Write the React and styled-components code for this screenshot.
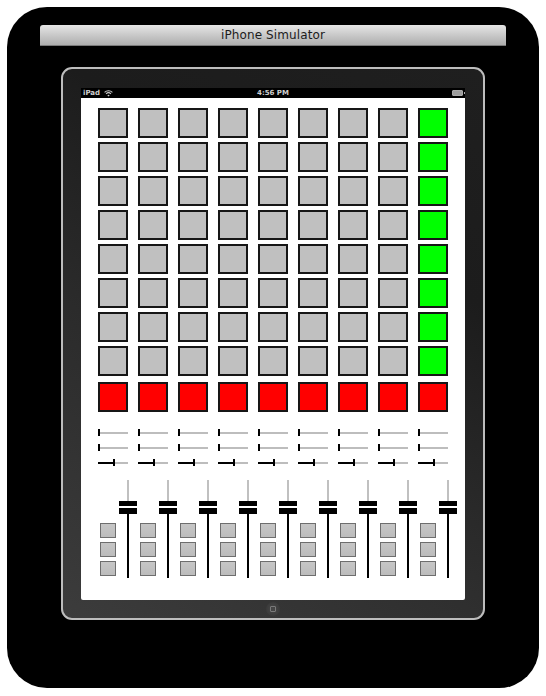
import React from "react";
import styled, { createGlobalStyle } from "styled-components";

const COLS = 9;
const PAD_ROWS = 8;
const sliderValues = [0, 0, 0.5];

const App = () => {
  const cols = Array.from({ length: COLS }, (_, i) => i);
  const rows = Array.from({ length: PAD_ROWS }, (_, i) => i);

  return (
    <Page>
      <GlobalStyle />
      <Window>
        <TitleBar>iPhone Simulator</TitleBar>
        <Bezel>
          <StatusBar>
            <StatusLeft>
              iPad
              <svg width="9" height="7" viewBox="0 0 9 7">
                <path d="M0.6 2.4 A5.5 5.5 0 0 1 8.4 2.4" stroke="#ccc" strokeWidth="1.1" fill="none" />
                <path d="M2.1 3.9 A3.4 3.4 0 0 1 6.9 3.9" stroke="#ccc" strokeWidth="1.1" fill="none" />
                <path d="M4.5 6.6 L3.3 5.3 A1.7 1.7 0 0 1 5.7 5.3 Z" fill="#ccc" />
              </svg>
            </StatusLeft>
            <Clock>4:56 PM</Clock>
            <Battery>
              <BatteryFill />
            </Battery>
          </StatusBar>

          <Screen>
            <PadGrid>
              {rows.map(r =>
                cols.map(c => (
                  <Pad key={`${r}-${c}`} $tone={c === COLS - 1 ? "green" : "gray"} />
                ))
              )}
            </PadGrid>

            <RedRow>
              {cols.map(c => (
                <Pad key={c} $tone="red" />
              ))}
            </RedRow>

            <SliderBlock>
              {sliderValues.map((v, i) => (
                <SliderRow key={i}>
                  {cols.map(c => (
                    <MiniSlider key={c}>
                      <Filled style={{ width: `${v * 100}%` }} />
                      <Knob />
                      <Rest />
                    </MiniSlider>
                  ))}
                </SliderRow>
              ))}
            </SliderBlock>

            <MixerRow>
              {cols.map(c => (
                <Strip key={c}>
                  <ButtonStack>
                    <SmallButton />
                    <SmallButton />
                    <SmallButton />
                  </ButtonStack>
                  <Fader>
                    <FaderTop />
                    <FaderCap />
                    <FaderBottom />
                  </Fader>
                </Strip>
              ))}
            </MixerRow>
          </Screen>

          <BezelFoot>
            <HomeButton>
              <HomeSquare />
            </HomeButton>
          </BezelFoot>
        </Bezel>
      </Window>
    </Page>
  );
};

export default App;

const GlobalStyle = createGlobalStyle`
  html, body {
    margin: 0;
    padding: 0;
    background: #ffffff;
  }
  body {
    font-family: "DejaVu Sans", "Liberation Sans", sans-serif;
  }
`;

const Page = styled.div`
  width: 546px;
  height: 696px;
  padding: 7px;
  box-sizing: border-box;
`;

const Window = styled.div`
  width: 532px;
  height: 681px;
  background: #000;
  border-radius: 40px;
  display: flex;
  flex-direction: column;
  align-items: center;
  padding-top: 18px;
  box-sizing: border-box;
`;

const TitleBar = styled.div`
  width: 466px;
  height: 21px;
  box-sizing: border-box;
  border-radius: 3px 3px 0 0;
  background: linear-gradient(#e6e6e6, #c9c9c9 50%, #aeaeae);
  border-bottom: 1px solid #7a7a7a;
  display: flex;
  justify-content: center;
  align-items: center;
  font-size: 12px;
  color: #1c1c1c;
  letter-spacing: 0.1px;
`;

const Bezel = styled.div`
  margin-top: 21px;
  width: 424px;
  box-sizing: border-box;
  border: 2px solid #bdbdbd;
  border-radius: 11px;
  padding: 19px 18px 0;
  background: linear-gradient(30deg, #3c3c3c 0%, #2b2b2b 40%, #1c1c1c 70%, #1f1f1f 100%);
  display: flex;
  flex-direction: column;
`;

const StatusBar = styled.div`
  height: 10px;
  background: #000;
  display: flex;
  align-items: center;
  justify-content: space-between;
  padding: 0 2px 0 2px;
  font-size: 7px;
  font-weight: bold;
  color: #cfcfcf;
  position: relative;
`;

const StatusLeft = styled.div`
  display: flex;
  align-items: center;
  gap: 4px;
`;

const Clock = styled.div`
  position: absolute;
  left: 0;
  right: 0;
  text-align: center;
`;

const Battery = styled.div`
  width: 9px;
  height: 4px;
  border: 1px solid #aaa;
  border-radius: 1px;
  position: relative;
  &::after {
    content: "";
    position: absolute;
    right: -3px;
    top: 1px;
    width: 1px;
    height: 2px;
    background: #aaa;
  }
`;

const BatteryFill = styled.div`
  width: 100%;
  height: 100%;
  background: #9d9d9d;
`;

const Screen = styled.div`
  height: 502px;
  background: #fff;
  border-radius: 0 0 2px 2px;
  padding: 10px 17px 0;
  box-sizing: border-box;
  display: flex;
  flex-direction: column;
`;

const PadGrid = styled.div`
  display: grid;
  grid-template-columns: repeat(9, 30px);
  grid-auto-rows: 30px;
  column-gap: 10px;
  row-gap: 4px;
`;

const RedRow = styled(PadGrid)`
  margin-top: 6px;
`;

const toneFill = {
  gray: "#c0c0c0",
  green: "#00ff00",
  red: "#ff0000",
};

const Pad = styled.div`
  box-sizing: border-box;
  border: 2px solid #161616;
  background: ${p => toneFill[p.$tone]};
`;

const SliderBlock = styled.div`
  margin-top: 17px;
  display: flex;
  flex-direction: column;
  gap: 8px;
`;

const SliderRow = styled.div`
  display: grid;
  grid-template-columns: repeat(9, 30px);
  column-gap: 10px;
  height: 7px;
`;

const MiniSlider = styled.div`
  display: flex;
  align-items: center;
  height: 7px;
`;

const Filled = styled.div`
  height: 2px;
  background: #000;
  flex: none;
`;

const Knob = styled.div`
  width: 2px;
  height: 7px;
  background: #000;
  flex: none;
`;

const Rest = styled.div`
  flex: 1;
  height: 2px;
  background: #bdbdbd;
`;

const MixerRow = styled.div`
  margin-top: 14px;
  display: grid;
  grid-template-columns: repeat(9, 40px);
`;

const Strip = styled.div`
  display: flex;
  align-items: flex-start;
  padding-left: 2px;
  gap: 3px;
`;

const ButtonStack = styled.div`
  margin-top: 43px;
  display: flex;
  flex-direction: column;
  gap: 4px;
`;

const SmallButton = styled.div`
  width: 16px;
  height: 15px;
  box-sizing: border-box;
  border: 1px solid #6e6e6e;
  background: linear-gradient(#c6c6c6, #bcbcbc);
`;

const Fader = styled.div`
  width: 18px;
  display: flex;
  flex-direction: column;
  align-items: center;
`;

const FaderTop = styled.div`
  width: 2px;
  height: 21px;
  background: #c0c0c0;
`;

const FaderCap = styled.div`
  width: 18px;
  height: 13px;
  background: linear-gradient(#000 0 5.5px, #fff 5.5px 7px, #000 7px);
`;

const FaderBottom = styled.div`
  width: 2px;
  height: 64px;
  background: #000;
`;

const BezelFoot = styled.div`
  height: 18px;
  display: flex;
  align-items: center;
  justify-content: center;
`;

const HomeButton = styled.div`
  width: 14px;
  height: 14px;
  border-radius: 50%;
  background: radial-gradient(#484848, #3a3a3a 70%, #333);
  display: flex;
  align-items: center;
  justify-content: center;
`;

const HomeSquare = styled.div`
  width: 4px;
  height: 4px;
  border: 1px solid #7a7a7a;
  border-radius: 1px;
`;
